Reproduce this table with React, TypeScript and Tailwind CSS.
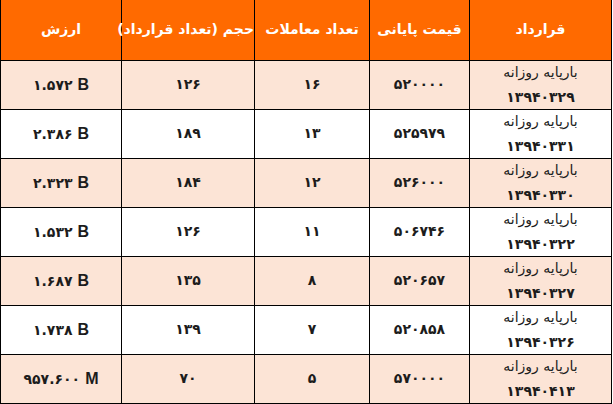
import React from 'react'

type Row = {
  contract: string
  price: string
  trades: string
  volume: string
  value: string
  unit: 'B' | 'M'
}

const ROWS: Row[] = [
  { contract: '۱۳۹۴۰۳۲۹', price: '۵۲۰۰۰۰', trades: '۱۶', volume: '۱۲۶', value: '۱.۵۷۲', unit: 'B' },
  { contract: '۱۳۹۴۰۳۳۱', price: '۵۲۵۹۷۹', trades: '۱۳', volume: '۱۸۹', value: '۲.۳۸۶', unit: 'B' },
  { contract: '۱۳۹۴۰۳۳۰', price: '۵۲۶۰۰۰', trades: '۱۲', volume: '۱۸۴', value: '۲.۳۲۳', unit: 'B' },
  { contract: '۱۳۹۴۰۳۲۲', price: '۵۰۶۷۴۶', trades: '۱۱', volume: '۱۲۶', value: '۱.۵۳۲', unit: 'B' },
  { contract: '۱۳۹۴۰۳۲۷', price: '۵۲۰۶۵۷', trades: '۸', volume: '۱۳۵', value: '۱.۶۸۷', unit: 'B' },
  { contract: '۱۳۹۴۰۳۲۶', price: '۵۲۰۸۵۸', trades: '۷', volume: '۱۳۹', value: '۱.۷۳۸', unit: 'B' },
  { contract: '۱۳۹۴۰۴۱۳', price: '۵۷۰۰۰۰', trades: '۵', volume: '۷۰', value: '۹۵۷.۶۰۰', unit: 'M' },
]

const HEADERS = ['قرارداد', 'قیمت پایانی', 'تعداد معاملات', 'حجم (تعداد قرارداد)', 'ارزش']

export default function App() {
  return (
    <div className="w-[613px] h-[404px] bg-white overflow-hidden font-['DejaVu_Sans',sans-serif]">
      <table dir="rtl" className="w-[612px] table-fixed border-collapse text-[#1c1c1c]">
        <colgroup>
          <col className="w-[142px]" />
          <col className="w-[100px]" />
          <col className="w-[115px]" />
          <col className="w-[133px]" />
          <col className="w-[121px]" />
        </colgroup>
        <thead>
          <tr className="h-[60px] bg-[#ff6a00]">
            {HEADERS.map((h) => (
              <th
                key={h}
                className="border-x border-b border-black text-white text-[14px] font-bold text-center align-middle px-0 whitespace-nowrap"
              >
                {h}
              </th>
            ))}
          </tr>
        </thead>
        <tbody>
          {ROWS.map((r, i) => (
            <tr key={r.contract} className={`h-[49px] ${i % 2 === 0 ? 'bg-[#fce4d6]' : 'bg-white'}`}>
              {/* contract, wraps onto two lines like the excel cell */}
              <td className="border border-black align-top p-0 text-center">
                <div className="h-[23px] leading-[22px] text-[14px]">بارپایه روزانه</div>
                <div className="h-[25px] leading-[26px] text-[14px] font-bold">{r.contract}</div>
              </td>
              <td className="border border-black text-center align-middle text-[14px] font-bold">{r.price}</td>
              <td className="border border-black text-center align-middle text-[14px] font-bold">{r.trades}</td>
              <td className="border border-black text-center align-middle text-[14px] font-bold">{r.volume}</td>
              <td className="border border-black text-center align-middle">
                <span dir="ltr" className="inline-flex items-baseline gap-[5px]">
                  <span className="text-[14px] font-bold">{r.value}</span>
                  <span className="text-[16px] font-bold font-['Liberation_Sans',sans-serif]">{r.unit}</span>
                </span>
              </td>
            </tr>
          ))}
        </tbody>
      </table>
    </div>
  )
}
